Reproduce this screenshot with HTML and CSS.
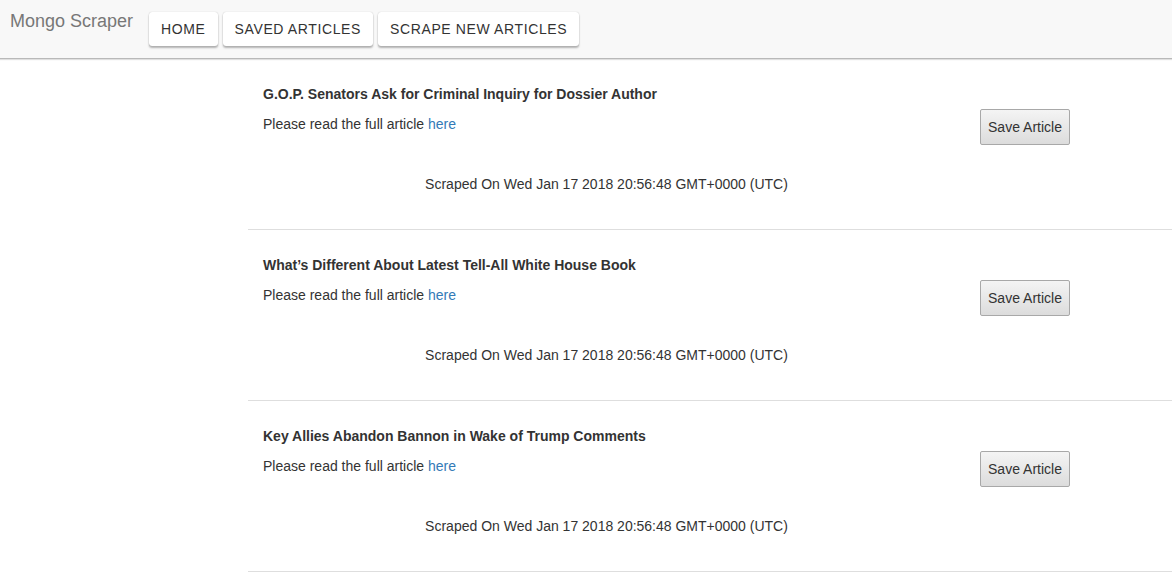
FILE: index.html
```html
<!DOCTYPE html>
<html>
<head>
<meta charset="utf-8">
<title>Mongo Scraper</title>
<link rel="stylesheet" href="styles.css">
</head>
<body>
<nav class="navbar">
  <span class="brand">Mongo Scraper</span>
  <div class="nav-buttons">
    <a class="nav-btn" href="#">Home</a>
    <a class="nav-btn" href="#">Saved Articles</a>
    <a class="nav-btn" href="#">Scrape New Articles</a>
  </div>
</nav>
<main class="articles">
  <article class="article">
    <div class="article-main">
      <h4 class="title">G.O.P. Senators Ask for Criminal Inquiry for Dossier Author</h4>
      <p class="read">Please read the full article <a href="#">here</a></p>
      <p class="scraped">Scraped On Wed Jan 17 2018 20:56:48 GMT+0000 (UTC)</p>
    </div>
    <div class="article-side"><button class="save-btn">Save Article</button></div>
  </article>
  <article class="article">
    <div class="article-main">
      <h4 class="title">What’s Different About Latest Tell-All White House Book</h4>
      <p class="read">Please read the full article <a href="#">here</a></p>
      <p class="scraped">Scraped On Wed Jan 17 2018 20:56:48 GMT+0000 (UTC)</p>
    </div>
    <div class="article-side"><button class="save-btn">Save Article</button></div>
  </article>
  <article class="article">
    <div class="article-main">
      <h4 class="title">Key Allies Abandon Bannon in Wake of Trump Comments</h4>
      <p class="read">Please read the full article <a href="#">here</a></p>
      <p class="scraped">Scraped On Wed Jan 17 2018 20:56:48 GMT+0000 (UTC)</p>
    </div>
    <div class="article-side"><button class="save-btn">Save Article</button></div>
  </article>
</main>
</body>
</html>
```
FILE: styles.css
```css
html, body {
  margin: 0;
  padding: 0;
  background: #fff;
  font-family: "Liberation Sans", Arial, Helvetica, sans-serif;
  font-size: 14px;
  line-height: 20px;
  color: #333;
  overflow: hidden;
}

.navbar {
  height: 58px;
  background: #f8f8f8;
  border-bottom: 1px solid #b9b9b9;
  box-shadow: 0 1px 1px rgba(0, 0, 0, 0.12);
  display: flex;
  align-items: flex-start;
  position: relative;
  z-index: 1;
}

.brand {
  font-size: 18px;
  line-height: 20px;
  color: #777;
  padding: 11px 0 0 10px;
}

.nav-buttons {
  display: flex;
  gap: 5px;
  margin: 12px 0 0 16px;
}

.nav-btn {
  display: block;
  height: 34px;
  line-height: 34px;
  padding: 0 12px;
  background: #fff;
  color: #333;
  text-decoration: none;
  text-transform: uppercase;
  letter-spacing: 0.62px;
  font-size: 14px;
  border-radius: 3px;
  box-shadow: 0 2px 2px rgba(0, 0, 0, 0.28), 0 0 1px rgba(0, 0, 0, 0.25);
}

.articles {
  margin-left: 248px;
}

.article {
  display: flex;
  padding: 25px 0 35px;
  border-bottom: 1px solid #dedede;
}

.article-main {
  width: 717px;
  padding: 0 15px;
  box-sizing: border-box;
}

.title {
  margin: 0;
  font-size: 14px;
  line-height: 20px;
  font-weight: bold;
}

.read {
  margin: 10px 0 0;
}

.read a {
  color: #337ab7;
  text-decoration: none;
}

.scraped {
  margin: 40px 0 0;
  text-align: center;
}

.article-side {
  padding: 25px 15px 0;
}

.save-btn {
  display: block;
  width: 90px;
  height: 36px;
  padding: 0;
  font-family: "Liberation Sans", Arial, sans-serif;
  font-size: 14px;
  color: #333;
  background: linear-gradient(#f4f4f4, #dcdcdc);
  border: 1px solid #a8a8a8;
  border-radius: 2px;
}
```
